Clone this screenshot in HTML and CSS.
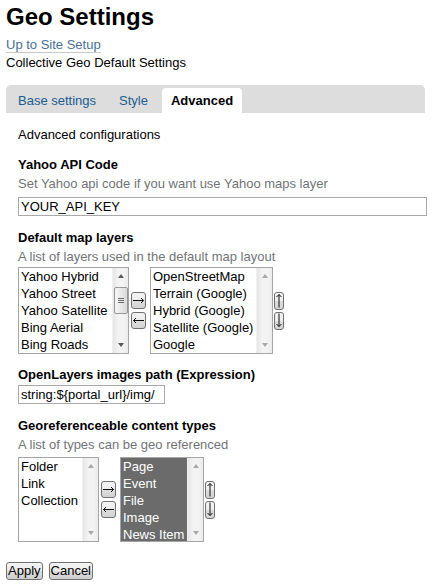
FILE: index.html
```html
<!DOCTYPE html>
<html lang="en">
<head>
<meta charset="utf-8">
<title>Geo Settings</title>
<link rel="stylesheet" href="styles.css">
</head>
<body>
<div class="page">
  <h1 class="title">Geo Settings</h1>
  <div class="parent"><a class="link-parent" href="#">Up to Site Setup</a></div>
  <p class="desc">Collective Geo Default Settings</p>

  <form class="form" onsubmit="return false">
    <nav class="tabs">
      <a class="tab" href="#">Base settings</a>
      <a class="tab" href="#">Style</a>
      <span class="tab active">Advanced</span>
    </nav>

    <div class="panel">
      <p class="intro">Advanced configurations</p>

      <div class="field">
        <label class="label">Yahoo API Code</label>
        <div class="help">Set Yahoo api code if you want use Yahoo maps layer</div>
        <input class="text-input wide" type="text" value="YOUR_API_KEY">
      </div>

      <div class="field">
        <label class="label">Default map layers</label>
        <div class="help">A list of layers used in the default map layout</div>
        <div class="chooser tall">
          <div class="listbox lb1">
            <div class="options">
              <div class="option">Yahoo Hybrid</div>
              <div class="option">Yahoo Street</div>
              <div class="option">Yahoo Satellite</div>
              <div class="option">Bing Aerial</div>
              <div class="option">Bing Roads</div>
            </div>
            <div class="scrollbar">
              <span class="sb-btn"><i class="tri up"></i></span>
              <span class="sb-track"><span class="thumb"><i class="grip"></i></span></span>
              <span class="sb-btn"><i class="tri down"></i></span>
            </div>
          </div>
          <div class="movers">
            <button class="mini h" type="button"><svg width="13" height="15" viewBox="0 0 13 15"><path d="M1 7.5H11.5M9 5L11.5 7.5L9 10" fill="none" stroke="#111" stroke-width="1"/></svg></button>
            <button class="mini h" type="button"><svg width="13" height="15" viewBox="0 0 13 15"><path d="M1.5 7.5H12M4 5L1.5 7.5L4 10" fill="none" stroke="#111" stroke-width="1"/></svg></button>
          </div>
          <div class="listbox lb2">
            <div class="options">
              <div class="option">OpenStreetMap</div>
              <div class="option">Terrain (Google)</div>
              <div class="option">Hybrid (Google)</div>
              <div class="option">Satellite (Google)</div>
              <div class="option">Google</div>
            </div>
            <div class="scrollbar disabled">
              <span class="sb-btn"><i class="tri up"></i></span>
              <span class="sb-track"></span>
              <span class="sb-btn"><i class="tri down"></i></span>
            </div>
          </div>
          <div class="orderers">
            <button class="mini v" type="button"><svg width="8" height="16" viewBox="0 0 8 16"><path d="M4 1.5V14.5M1.5 4L4 1.5L6.5 4" fill="none" stroke="#111" stroke-width="1"/></svg></button>
            <button class="mini v" type="button"><svg width="8" height="15" viewBox="0 0 8 15"><path d="M4 0.5V13.5M1.5 11L4 13.5L6.5 11" fill="none" stroke="#111" stroke-width="1"/></svg></button>
          </div>
        </div>
      </div>

      <div class="field f-path">
        <label class="label">OpenLayers images path (Expression)</label>
        <input class="text-input narrow" type="text" value="string:${portal_url}/img/">
      </div>

      <div class="field">
        <label class="label">Georeferenceable content types</label>
        <div class="help">A list of types can be geo referenced</div>
        <div class="chooser short">
          <div class="listbox lb3">
            <div class="options">
              <div class="option">Folder</div>
              <div class="option">Link</div>
              <div class="option">Collection</div>
            </div>
            <div class="scrollbar disabled">
              <span class="sb-btn"><i class="tri up"></i></span>
              <span class="sb-track"></span>
              <span class="sb-btn"><i class="tri down"></i></span>
            </div>
          </div>
          <div class="movers">
            <button class="mini h" type="button"><svg width="13" height="15" viewBox="0 0 13 15"><path d="M1 7.5H11.5M9 5L11.5 7.5L9 10" fill="none" stroke="#111" stroke-width="1"/></svg></button>
            <button class="mini h" type="button"><svg width="13" height="15" viewBox="0 0 13 15"><path d="M1.5 7.5H12M4 5L1.5 7.5L4 10" fill="none" stroke="#111" stroke-width="1"/></svg></button>
          </div>
          <div class="listbox lb4">
            <div class="options selected">
              <div class="option">Page</div>
              <div class="option">Event</div>
              <div class="option">File</div>
              <div class="option">Image</div>
              <div class="option">News Item</div>
            </div>
            <div class="scrollbar disabled">
              <span class="sb-btn"><i class="tri up"></i></span>
              <span class="sb-track"></span>
              <span class="sb-btn"><i class="tri down"></i></span>
            </div>
          </div>
          <div class="orderers">
            <button class="mini v" type="button"><svg width="8" height="16" viewBox="0 0 8 16"><path d="M4 1.5V14.5M1.5 4L4 1.5L6.5 4" fill="none" stroke="#111" stroke-width="1"/></svg></button>
            <button class="mini v" type="button"><svg width="8" height="15" viewBox="0 0 8 15"><path d="M4 0.5V13.5M1.5 11L4 13.5L6.5 11" fill="none" stroke="#111" stroke-width="1"/></svg></button>
          </div>
        </div>
      </div>
    </div>

    <div class="actions">
      <button class="btn" type="submit">Apply</button>
      <button class="btn" type="button">Cancel</button>
    </div>
  </form>
</div>
</body>
</html>
```

FILE: styles.css
```css
* { box-sizing: border-box; }

body {
  margin: 0;
  background: #fff;
  color: #000;
  font-family: "Liberation Sans", Arial, sans-serif;
  font-size: 13px;
  line-height: 17px;
}

.page { padding: 0 0 0 6px; }

.title {
  margin: 2px 0 0;
  font-size: 24px;
  line-height: 30px;
  font-weight: bold;
}

.parent { margin-top: 4px; line-height: 18px; }

.link-parent {
  color: #4a7095;
  text-decoration: none;
  border-bottom: 1px solid #c8c8c8;
}

.desc { margin: 0; }

.form { margin: 0; }

.tabs {
  margin-top: 14px;
  width: 419px;
  display: flex;
  gap: 5px;
  padding: 3px 0 0 3px;
  background: #dddddd;
  border-radius: 5px 5px 0 0;
}

.tab {
  padding: 4px 9px;
  color: #205c90;
  text-decoration: none;
  border-radius: 4px 4px 0 0;
}

.tab.active {
  background: #fff;
  color: #000;
  font-weight: bold;
}

.panel { padding: 13px 0 0 12px; }

.intro { margin: 0 0 13px; }

.field + .field { margin-top: 13px; }
.field.f-path { margin-top: 12px; }

.label { display: block; font-weight: bold; }

.help { margin-top: 2px; color: #717477; }

.text-input {
  display: block;
  height: 19px;
  margin: 5px 0 0;
  padding: 0 2px;
  border: 1px solid #a9a9a9;
  border-radius: 0;
  background: #fff;
  color: #000;
  font: 13px/17px "Liberation Sans", Arial, sans-serif;
  outline: none;
}
.text-input.wide { width: 409px; }
.text-input.narrow { width: 147px; margin-top: 2px; }

.chooser { display: flex; align-items: center; }
.chooser.tall { margin-top: 2px; }
.chooser.short { margin-top: 4px; }

.listbox {
  display: flex;
  border: 1px solid #a5a5a5;
  background: #fff;
  height: 87px;
}
.chooser.short .listbox { height: 85px; }

.lb1 { width: 111px; }
.lb2 { width: 123px; }
.lb3 { width: 81px; }
.lb4 { width: 84px; }

.options {
  flex: 1;
  min-width: 0;
  overflow: hidden;
  white-space: nowrap;
}
.option { padding-left: 2px; line-height: 17px; }
.options.selected { background: #6b6b6b; color: #fff; }

.scrollbar {
  width: 16px;
  flex: none;
  display: flex;
  flex-direction: column;
  background: linear-gradient(to right, #e6e6e6, #f3f3f3 35%, #f3f3f3 70%, #ebebeb);
  border-left: 1px solid #f0f0f0;
}

.sb-btn {
  height: 16px;
  flex: none;
  display: flex;
  align-items: center;
  justify-content: center;
}

.sb-track {
  flex: 1;
  display: flex;
  flex-direction: column;
  align-items: center;
}

.tri { display: block; width: 0; height: 0; border-left: 3.5px solid transparent; border-right: 3.5px solid transparent; }
.tri.up { border-bottom: 4px solid #5a5a5a; }
.tri.down { border-top: 4px solid #5a5a5a; }
.scrollbar.disabled .tri.up { border-bottom-color: #a8a8a8; }
.scrollbar.disabled .tri.down { border-top-color: #a8a8a8; }

.thumb {
  margin-top: 3px;
  width: 14px;
  height: 27px;
  border: 1px solid #979797;
  border-radius: 2px;
  background: linear-gradient(to right, #f5f5f5, #e9e9e9 50%, #d9d9d9);
  display: flex;
  align-items: center;
  justify-content: center;
}

.grip {
  display: block;
  width: 6px;
  height: 5px;
  border-top: 1px solid #6d6d6d;
  border-bottom: 1px solid #6d6d6d;
  background: linear-gradient(#6d6d6d, #6d6d6d) center / 100% 1px no-repeat;
}

.movers {
  display: flex;
  flex-direction: column;
  gap: 3px;
  margin: 0 4px 0 2px;
}

.orderers {
  display: flex;
  flex-direction: column;
  gap: 2px;
  margin-left: 1px;
}

.mini {
  margin: 0;
  padding: 0;
  display: flex;
  align-items: center;
  justify-content: center;
  border: 1px solid #707070;
  border-radius: 3px;
  background: linear-gradient(#f4f4f4, #ececec 50%, #dedede 50%, #d3d3d3);
}
.mini.h { width: 15px; height: 17px; }
.mini.v { width: 10px; height: 18px; }
.mini svg { display: block; }

.actions {
  display: flex;
  gap: 6px;
  margin-top: 20px;
}

.btn {
  margin: 0;
  height: 18px;
  padding: 0 1px;
  border: 1px solid #707070;
  border-radius: 3px;
  background: linear-gradient(#f4f4f4, #ebebeb 50%, #dddddd 50%, #cfcfcf);
  color: #000;
  font: 13px/16px "Liberation Sans", Arial, sans-serif;
}
```
